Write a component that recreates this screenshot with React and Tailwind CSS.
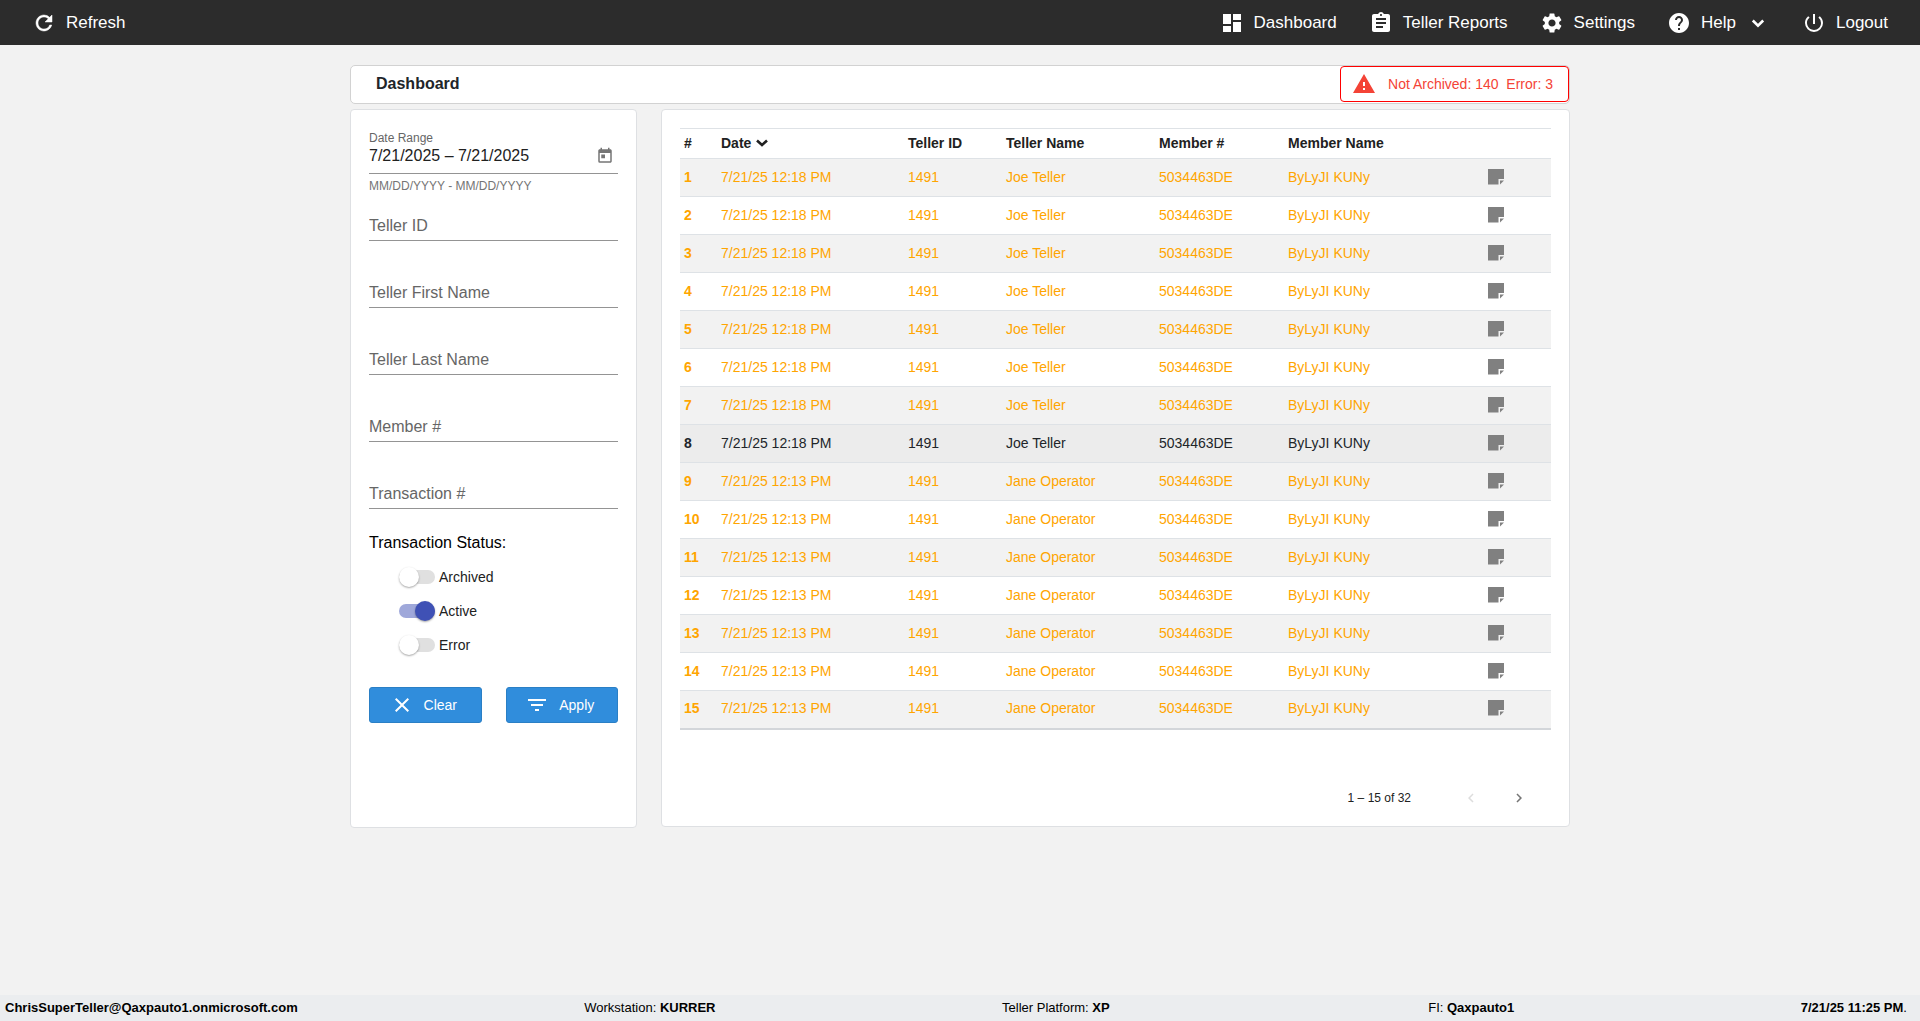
import React, { useState } from "react";
import {
  MdDashboard,
  MdAssignment,
  MdSettings,
  MdHelp,
  MdPowerSettingsNew,
  MdWarning,
  MdToday,
  MdClose,
  MdFilterList,
  MdChevronLeft,
  MdChevronRight,
} from "react-icons/md";

const NAV = [
  { label: "Dashboard", Icon: MdDashboard },
  { label: "Teller Reports", Icon: MdAssignment },
  { label: "Settings", Icon: MdSettings },
  { label: "Help", Icon: MdHelp, menu: true },
  { label: "Logout", Icon: MdPowerSettingsNew },
];

const FIELDS = ["Teller ID", "Teller First Name", "Teller Last Name", "Member #", "Transaction #"];

const ROWS = Array.from({ length: 15 }, (_, i) => ({
  id: i + 1,
  date: i < 8 ? "7/21/25 12:18 PM" : "7/21/25 12:13 PM",
  tellerId: "1491",
  teller: i < 8 ? "Joe Teller" : "Jane Operator",
  member: "5034463DE",
  name: "ByLyJI KUNy",
}));

const ACTIVE_ROW = 8;

function MenuArrow() {
  return (
    <svg viewBox="0 0 24 24" className="size-6" fill="none" stroke="currentColor" strokeWidth="2.600" aria-hidden="true">
      <path d="M6.800 9.500L12 14.700l5.200-5.200" />
    </svg>
  );
}

function RefreshIcon() {
  return (
    <svg viewBox="0 0 24 24" className="size-6" fill="currentColor" stroke="currentColor" strokeWidth="0.5" aria-hidden="true">
      <path d="M17.650 6.350A7.958 7.958 0 0 0 12 4c-4.420 0-7.990 3.580-7.990 8s3.570 8 7.990 8c3.730 0 6.840-2.550 7.730-6h-2.080A5.990 5.990 0 0 1 12 18c-3.310 0-6-2.690-6-6s2.690-6 6-6c1.660 0 3.140.69 4.220 1.780L13 11h7V4l-2.350 2.350z" />
    </svg>
  );
}

function TopBar() {
  return (
    <header className="flex h-[45px] items-center justify-between bg-[#2c2c2c] px-8 text-[17px] text-white">
      <button type="button" className="flex items-center gap-[10px]">
        <RefreshIcon />
        Refresh
      </button>
      <nav className="flex items-center gap-8">
        {NAV.map(({ label, Icon, menu }) => (
          <a key={label} href="#" className="flex items-center gap-[10px]">
            <Icon className="size-6" />
            {label}
            {menu && <MenuArrow />}
          </a>
        ))}
      </nav>
    </header>
  );
}

function TitleBar() {
  return (
    <div className="flex h-[39px] items-start justify-between rounded-[5px] border border-[#d2d2d2] bg-white pl-[25px]">
      <h1 className="text-base leading-9 font-bold text-[#212529]">Dashboard</h1>
      <button
        type="button"
        className="flex h-9 items-center rounded border border-[#f00] bg-white pl-[11px] pr-[15px] text-sm text-[#f44336]"
      >
        <MdWarning className="mr-3 size-6" />
        <span className="whitespace-pre">{"Not Archived: 140  Error: 3"}</span>
      </button>
    </div>
  );
}

function Toggle({ label, defaultChecked }) {
  return (
    <label className="flex h-[34px] items-center gap-1 text-sm text-[#212121]">
      <span className="relative flex h-5 w-9 items-center">
        <input type="checkbox" role="switch" defaultChecked={defaultChecked} className="peer sr-only" />
        <span className="h-[14px] w-9 rounded-full bg-[#e0e0e0] peer-checked:bg-[#9fa8da]" />
        <span className="absolute left-0 size-5 rounded-full bg-white shadow-[0_1px_2px_rgba(0,0,0,0.35)] peer-checked:left-4 peer-checked:bg-[#3f51b5]" />
      </span>
      {label}
    </label>
  );
}

function Filters() {
  return (
    <form
      onSubmit={(e) => e.preventDefault()}
      className="flex w-[287px] shrink-0 flex-col rounded border border-[#dee0e3] bg-white px-[18px] pt-5"
    >
      <div className="flex items-center justify-between border-b border-[#949494] pb-[7px]">
        <div>
          <label htmlFor="range" className="block text-xs leading-4 text-[#666]">Date Range</label>
          <input
            id="range"
            defaultValue="7/21/2025 – 7/21/2025"
            className="block h-5 w-48 bg-transparent text-base leading-5 text-[#212121] outline-none"
          />
        </div>
        <button type="button" aria-label="Open calendar" className="mr-1 mt-4 text-[#757575]">
          <MdToday className="size-[18px]" />
        </button>
      </div>
      <p className="mt-1 text-xs leading-4 text-[#757575]">MM/DD/YYYY - MM/DD/YYYY</p>

      <div className="mt-[18px] flex flex-col gap-[38px]">
        {FIELDS.map((f) => (
          <input
            key={f}
            aria-label={f}
            placeholder={f}
            className="h-[29px] w-full border-b border-[#949494] bg-transparent text-base text-[#212121] outline-none placeholder:text-[#666]"
          />
        ))}
      </div>

      <fieldset className="mt-[22px]">
        <legend className="text-base leading-6 text-black">Transaction Status:</legend>
        <div className="mt-[5px] pl-[30px]">
          <Toggle label="Archived" />
          <Toggle label="Active" defaultChecked />
          <Toggle label="Error" />
        </div>
      </fieldset>

      <div className="mt-[25px] grid grid-cols-2 gap-6">
        <button type="reset" className="flex h-9 items-center justify-center gap-[10px] rounded-[3px] border border-[#2a7fc5] bg-[#308ddc] pr-1 text-sm text-white">
          <MdClose className="size-6" />
          Clear
        </button>
        <button type="submit" className="flex h-9 items-center justify-center gap-[10px] rounded-[3px] border border-[#2a7fc5] bg-[#308ddc] pr-1 text-sm text-white">
          <MdFilterList className="size-6" />
          Apply
        </button>
      </div>
    </form>
  );
}

function NoteIcon() {
  return (
    <svg viewBox="0 0 16 16" className="size-4" fill="#808080" aria-hidden="true">
      <path d="M0 0h16v10h-5.500v5.500H0z" />
      <path d="M12 11.500h4L12 15.500z" />
    </svg>
  );
}

function SortIcon() {
  return (
    <svg viewBox="0 0 12 8" className="h-2 w-3" fill="none" stroke="currentColor" strokeWidth="2.600" aria-hidden="true">
      <path d="M1 1.500l5 4.500 5-4.500" />
    </svg>
  );
}

function Results() {
  const [selected, setSelected] = useState(ACTIVE_ROW);
  return (
    <section className="mb-px flex min-w-0 flex-1 flex-col rounded border border-[#dee0e3] bg-white px-[18px] pt-[18px] pb-2">
      <table className="w-full table-fixed border-collapse text-left text-sm text-[#212121]">
        <colgroup>
          <col className="w-[37px]" />
          <col className="w-[187px]" />
          <col className="w-[98px]" />
          <col className="w-[153px]" />
          <col className="w-[129px]" />
          <col className="w-[180px]" />
          <col />
        </colgroup>
        <thead>
          <tr className="h-[30px] border-y border-[#dee2e6]">
            <th className="px-1 pb-0.5">#</th>
            <th className="px-1 pb-0.5">
              <button type="button" className="flex items-center gap-[5px] font-bold">
                Date <SortIcon />
              </button>
            </th>
            <th className="px-1 pb-0.5">Teller ID</th>
            <th className="px-1 pb-0.5">Teller Name</th>
            <th className="px-1 pb-0.5">Member #</th>
            <th className="px-1 pb-0.5">Member Name</th>
            <th aria-label="Note" />
          </tr>
        </thead>
        <tbody className="border-b-2 border-[#d3d6da]">
          {ROWS.map((r) => (
            <tr
              key={r.id}
              onClick={() => setSelected(r.id)}
              className={
                r.id === selected
                  ? "h-[38px] border-b border-[#dee2e6] bg-[#ececec] text-[#212529]"
                  : "h-[38px] border-b border-[#dee2e6] text-[#ffa500] odd:bg-[#f2f2f2]"
              }
            >
              <th scope="row" className="px-1 pb-0.5">{r.id}</th>
              <td className="px-1 pb-0.5">{r.date}</td>
              <td className="px-1 pb-0.5">{r.tellerId}</td>
              <td className="px-1 pb-0.5">{r.teller}</td>
              <td className="px-1 pb-0.5">{r.member}</td>
              <td className="px-1 pb-0.5">{r.name}</td>
              <td className="pb-0.5">
                <button type="button" aria-label="Open note" className="ml-6 block">
                  <NoteIcon />
                </button>
              </td>
            </tr>
          ))}
        </tbody>
      </table>
      <div className="mt-12 flex h-10 items-center justify-end pr-2 text-xs text-[#212121]">
        <span className="mr-9">1 – 15 of 32</span>
        <button type="button" disabled aria-label="Previous page" className="flex size-12 items-center justify-center text-[#ddd]">
          <MdChevronLeft className="size-[18px]" />
        </button>
        <button type="button" aria-label="Next page" className="flex size-12 items-center justify-center text-[#757575]">
          <MdChevronRight className="size-[18px]" />
        </button>
      </div>
    </section>
  );
}

function StatusBar() {
  return (
    <footer className="mt-auto flex h-[26px] items-center justify-between bg-[#ebedef] px-[5px] text-[13px] text-black">
      <b>ChrisSuperTeller@Qaxpauto1.onmicrosoft.com</b>
      <span>Workstation: <b>KURRER</b></span>
      <span className="pr-8">Teller Platform: <b>XP</b></span>
      <span>FI: <b>Qaxpauto1</b></span>
      <span className="pr-2"><b>7/21/25 11:25 PM</b>.</span>
    </footer>
  );
}

export default function App() {
  return (
    <div className="flex min-h-screen flex-col bg-[#f2f2f2] font-['Liberation_Sans',Arial,sans-serif]">
      <TopBar />
      <main className="mx-auto w-full max-w-[1220px] pt-5">
        <TitleBar />
        <div className="mt-[5px] flex min-h-[719px] gap-6">
          <Filters />
          <Results />
        </div>
      </main>
      <StatusBar />
    </div>
  );
}
